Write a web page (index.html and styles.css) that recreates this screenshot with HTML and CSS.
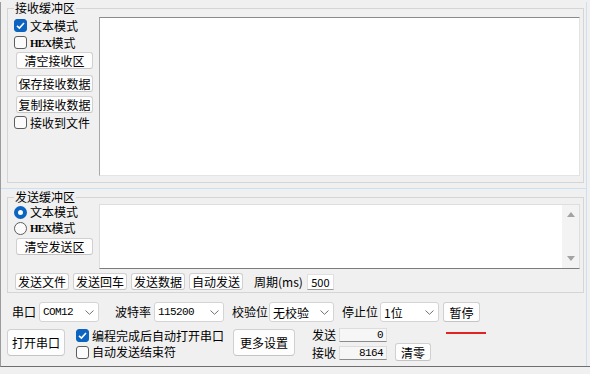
FILE: index.html
```html
<!DOCTYPE html>
<html>
<head>
<meta charset="utf-8">
<link rel="stylesheet" href="styles.css">
</head>
<body>
<div class="window">
  <div class="panel">
    <fieldset class="group group-recv">
      <legend>接收缓冲区</legend>
      <div class="group-body">
        <div class="side">
          <div class="check"><span class="cb on"><svg width="11" height="11" viewBox="0 0 11 11"><polyline points="2,5.8 4.4,8 9,3" fill="none" stroke="#fff" stroke-width="1.6"/></svg></span>文本模式</div>
          <div class="check"><span class="cb"></span><span class="hex">HEX</span>模式</div>
          <button class="btn side-btn b1">清空接收区</button>
          <button class="btn side-btn b2">保存接收数据</button>
          <button class="btn side-btn b3">复制接收数据</button>
          <div class="check c4"><span class="cb"></span>接收到文件</div>
        </div>
        <div class="recv-area"></div>
      </div>
    </fieldset>
    <div class="hsplit"></div>
    <fieldset class="group group-send">
      <legend>发送缓冲区</legend>
      <div class="group-body">
        <div class="side">
          <div class="check r1"><span class="rb on"></span>文本模式</div>
          <div class="check r2"><span class="rb"></span><span class="hex">HEX</span>模式</div>
          <button class="btn side-btn b4">清空发送区</button>
        </div>
        <div class="send-area">
          <div class="send-text"></div>
          <div class="vscroll">
            <svg width="8" height="5" viewBox="0 0 8 5"><polygon points="0,5 4,0 8,5" fill="#a3a3a3"/></svg>
            <svg width="8" height="5" viewBox="0 0 8 5"><polygon points="0,0 8,0 4,5" fill="#a3a3a3"/></svg>
          </div>
        </div>
      </div>
      <div class="send-actions">
        <button class="btn act">发送文件</button>
        <button class="btn act">发送回车</button>
        <button class="btn act">发送数据</button>
        <button class="btn act">自动发送</button>
        <span class="period">周期(ms)</span>
        <span class="period-field">500</span>
      </div>
    </fieldset>
    <div class="port-row">
      <span class="lbl l-port">串口</span>
      <div class="combo c-port"><span class="mono">COM12</span><svg width="9" height="5" viewBox="0 0 9 5"><polyline points="0.5,0.5 4.5,4.3 8.5,0.5" fill="none" stroke="#707070" stroke-width="1"/></svg></div>
      <span class="lbl l-baud">波特率</span>
      <div class="combo c-baud"><span class="mono">115200</span><svg width="9" height="5" viewBox="0 0 9 5"><polyline points="0.5,0.5 4.5,4.3 8.5,0.5" fill="none" stroke="#707070" stroke-width="1"/></svg></div>
      <span class="lbl l-parity">校验位</span>
      <div class="combo c-parity"><span>无校验</span><svg width="9" height="5" viewBox="0 0 9 5"><polyline points="0.5,0.5 4.5,4.3 8.5,0.5" fill="none" stroke="#707070" stroke-width="1"/></svg></div>
      <span class="lbl l-stop">停止位</span>
      <div class="combo c-stop"><span>1位</span><svg width="9" height="5" viewBox="0 0 9 5"><polyline points="0.5,0.5 4.5,4.3 8.5,0.5" fill="none" stroke="#707070" stroke-width="1"/></svg></div>
      <button class="btn pause">暂停</button>
    </div>
    <div class="ctrl-row">
      <button class="btn open">打开串口</button>
      <div class="opts">
        <div class="check"><span class="cb on"><svg width="11" height="11" viewBox="0 0 11 11"><polyline points="2,5.8 4.4,8 9,3" fill="none" stroke="#fff" stroke-width="1.6"/></svg></span>编程完成后自动打开串口</div>
        <div class="check"><span class="cb"></span>自动发送结束符</div>
      </div>
      <button class="btn more">更多设置</button>
      <div class="counts">
        <div class="count-row"><span class="clbl">发送</span><span class="cfield mono">0</span></div>
        <div class="count-row"><span class="clbl">接收</span><span class="cfield mono">8164</span></div>
      </div>
      <button class="btn clear">清零</button>
    </div>
    <span class="annot"></span>
  </div>
</div>
</body>
</html>
```

FILE: styles.css
```css
* { box-sizing: border-box; }
html, body { margin: 0; padding: 0; }
body {
  background: #f0f0f0;
  font-family: "Noto Sans CJK SC", "Microsoft YaHei", sans-serif;
  font-size: 12px;
  color: #000;
  width: 590px;
  height: 374px;
  overflow: hidden;
}
.mono {
  font-family: "Liberation Mono", monospace;
  font-size: 11px;
  letter-spacing: -0.6px;
}
.hex {
  font-family: "Liberation Serif", serif;
  font-weight: bold;
  font-size: 11px;
  letter-spacing: -0.8px;
}
.window {
  width: 590px;
  height: 365px;
  border-left: 1px solid #9b9b9b;
  border-bottom: 1px solid #6f6f6f;
}
.panel {
  position: relative;
  width: 586px;
  height: 364px;
  border-right: 1px solid #cddff0;
}
.group {
  margin: 0 0 0 6px;
  padding: 3px 3px 6px 6px;
  border: 1px solid #d5d5d5;
  width: 577px;
  min-width: 0;
}
.group legend {
  margin-left: 0;
  padding: 0 1px;
  font-size: 12px;
  line-height: 12px;
  height: 12px;
}
.group-recv { margin-top: 2px; }
.group-send { margin-top: 2px; padding-top: 1px; padding-bottom: 2px; }
.hsplit { height: 1px; margin-top: 5px; background: #cde0f1; }
.group-body { display: flex; align-items: flex-start; }
.side {
  width: 79px;
  flex: none;
  display: flex;
  flex-direction: column;
  align-items: flex-start;
}
.check {
  display: flex;
  align-items: center;
  height: 17px;
  line-height: 16px;
  white-space: nowrap;
}
.check.r1 { height: 16px; }
.check.r2 { height: 16px; }
.cb {
  width: 13px;
  height: 13px;
  border: 1px solid #5d5d5d;
  border-radius: 3px;
  background: #fbfbfb;
  margin-right: 3px;
  flex: none;
  display: flex;
  align-items: center;
  justify-content: center;
}
.cb.on { background: #0a64c0; border-color: #0a64c0; }
.rb {
  width: 13px;
  height: 13px;
  border: 1px solid #5d5d5d;
  border-radius: 50%;
  background: #fbfbfb;
  margin-right: 3px;
  flex: none;
}
.rb.on { border: 4px solid #0a64c0; background: #fff; }
.btn {
  font: inherit;
  font-size: 12px;
  line-height: 15px;
  height: 17px;
  padding: 0;
  margin: 0;
  border: 1px solid #d0d0d0;
  border-bottom-color: #c4c4c4;
  border-radius: 3px;
  background: #fdfdfd;
  color: #000;
  display: flex;
  align-items: center;
  justify-content: center;
  white-space: nowrap;
  flex: none;
}
.side-btn { width: 77px; margin-left: 2px; }
.b1 { margin-top: 1px; }
.b2 { margin-top: 6px; }
.b3 { margin-top: 4px; }
.c4 { margin-top: 1px; }
.b4 { margin-top: 2px; }
.recv-area {
  width: 481px;
  height: 159px;
  margin-left: 6px;
  background: #fff;
  border: 1px solid #e3e3e3;
  border-top-color: #8a8a8a;
  border-left-color: #a8a8a8;
}
.send-area {
  width: 481px;
  height: 65px;
  margin-left: 6px;
  background: #fff;
  border: 1px solid #dedede;
  border-bottom-color: #7c7c7c;
  display: flex;
}
.send-text { flex: 1; }
.vscroll {
  width: 17px;
  background: #f3f3f3;
  display: flex;
  flex-direction: column;
  justify-content: space-between;
  align-items: center;
  padding: 7px 0 7px;
}
.vscroll svg { display: block; }
.send-actions {
  display: flex;
  align-items: center;
  margin-top: 4px;
  height: 17px;
}
.act { width: 54px; margin-right: 4px; }
.act:first-child { margin-left: 1px; }
.period { margin-left: 7px; white-space: nowrap; line-height: 17px; }
.period-field {
  margin-left: 4px;
  width: 27px;
  height: 16px;
  background: #fff;
  border: 1px solid #e0e0e0;
  border-bottom-color: #9a9a9a;
  font-size: 11px;
  line-height: 14px;
  text-align: center;
}
.port-row {
  display: flex;
  align-items: center;
  height: 20px;
  margin-top: 9px;
}
.lbl { white-space: nowrap; line-height: 20px; }
.l-port { margin-left: 11px; }
.l-baud { margin-left: 16px; }
.l-parity { margin-left: 8px; }
.l-stop { margin-left: 8px; }
.combo {
  height: 20px;
  border: 1px solid #d4d4d4;
  border-radius: 3px;
  background: #fff;
  display: flex;
  align-items: center;
  justify-content: space-between;
  padding: 0 4px 0 3px;
  white-space: nowrap;
  flex: none;
}
.combo svg { display: block; }
.c-port { margin-left: 3px; width: 60px; }
.c-baud { margin-left: 3px; width: 70px; }
.c-parity { margin-left: 1px; width: 65px; }
.c-stop { margin-left: 2px; width: 59px; }
.pause { margin-left: 4px; width: 37px; height: 20px; }
.ctrl-row {
  display: flex;
  align-items: flex-start;
  margin-top: 5px;
}
.open { margin-left: 6px; margin-top: 2px; width: 58px; height: 27px; border-radius: 4px; }
.opts { margin-left: 11px; display: flex; flex-direction: column; }
.opts .check:last-child { height: 16px; }
.more { margin-left: 9px; margin-top: 2px; width: 62px; height: 27px; border-radius: 4px; }
.counts {
  margin-left: 17px;
  margin-top: 1px;
  display: flex;
  flex-direction: column;
  gap: 4px;
}
.count-row { display: flex; align-items: center; height: 14px; }
.clbl { width: 24px; line-height: 14px; white-space: nowrap; }
.cfield {
  margin-left: 3px;
  width: 48px;
  height: 14px;
  background: #f6f6f6;
  border: 1px solid #dcdcdc;
  border-bottom-color: #8c8c8c;
  text-align: right;
  padding-right: 3px;
  line-height: 12px;
}
.clear { margin-left: 8px; margin-top: 16px; width: 36px; height: 18px; }
.annot {
  position: absolute;
  left: 445px;
  top: 330px;
  width: 40px;
  height: 2px;
  background: #e02424;
}
```
